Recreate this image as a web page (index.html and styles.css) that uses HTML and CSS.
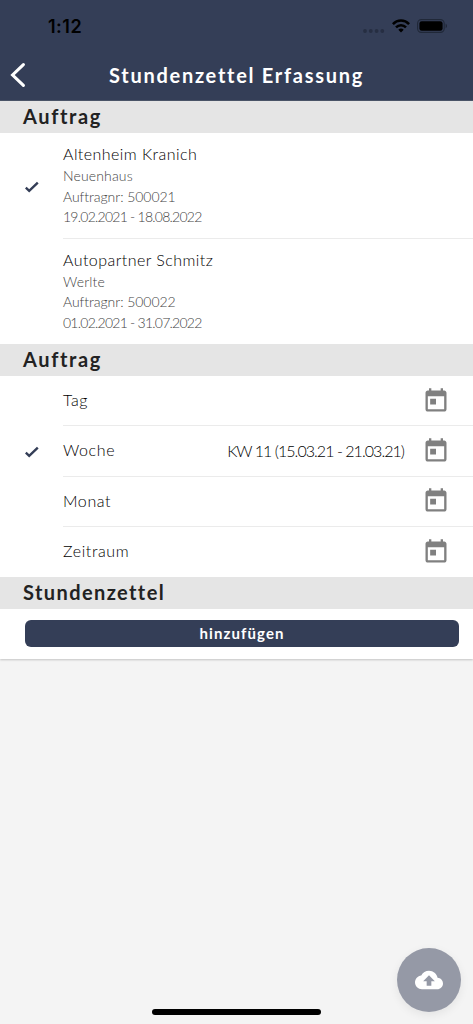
FILE: index.html
```html
<!DOCTYPE html>
<html lang="de">
<head>
    <meta charset="UTF-8">
    <meta name="viewport" content="width=device-width, initial-scale=1.0">
    <title>Stundenzettel Erfassung</title>
    <link rel="stylesheet" href="styles.css">
</head>
<body>
    <svg class="sprite" width="0" height="0">
        <symbol id="calendar" viewBox="0 0 24 24">
            <path d="M19 3h-1V1h-2v2H8V1H6v2H5c-1.11 0-1.99.9-1.99 2L3 19c0 1.1.89 2 2 2h14c1.1 0 2-.9 2-2V5c0-1.1-.9-2-2-2zm0 16H5V8h14v11zM7 10h5v5H7z"/>
        </symbol>
        <symbol id="check" viewBox="0 0 14 12">
            <path d="M.8 6.6L4.2 9.9L12.8 1.7" fill="none" stroke="#343e57" stroke-width="2.4"/>
        </symbol>
    </svg>

    <header>
        <div class="status-bar">
            <span class="time">1:12</span>
            <div class="status-icons">
                <svg width="22" height="4" viewBox="0 0 22 4" fill="#262e42">
                    <circle cx="2" cy="2" r="1.9"/>
                    <circle cx="7.8" cy="2" r="1.9"/>
                    <circle cx="13.6" cy="2" r="1.9"/>
                    <circle cx="19.3" cy="2" r="1.9"/>
                </svg>
                <svg class="wifi" width="18" height="14" viewBox="0 0 18 14" fill="none" stroke="#000" stroke-width="2.5">
                    <path d="M.9 5.1C5.4.4 12.6.4 17.1 5.1"/>
                    <path d="M4 8.3c2.8-2.9 7.2-2.9 10 0"/>
                    <path d="M9 13.4L6.3 10.7c1.5-1.5 3.9-1.5 5.4 0z" fill="#000" stroke="none"/>
                </svg>
                <svg class="battery" width="31" height="14" viewBox="0 0 31 14">
                    <rect x=".6" y=".6" width="26.6" height="12.8" rx="3.8" fill="none" stroke="#202838" stroke-width="1.1"/>
                    <rect x="2.4" y="2.2" width="23.2" height="9.6" rx="2.3"/>
                    <path d="M28.6 4.8c1.9.7 1.9 3.7 0 4.4z" fill="#202838"/>
                </svg>
            </div>
        </div>
        <div class="title-bar">
            <svg class="back" width="16" height="26" viewBox="0 0 16 26">
                <path d="M13.4 2.6L2.6 13l10.8 10.4" fill="none" stroke="#fff" stroke-width="3.1" stroke-linecap="round"/>
            </svg>
            <h1>Stundenzettel Erfassung</h1>
        </div>
    </header>

    <main>
        <h2>Auftrag</h2>
        <ul class="orders">
            <li>
                <div class="mark"><svg width="14" height="12"><use href="#check"/></svg></div>
                <div class="order">
                    <h3>Altenheim Kranich</h3>
                    <p class="place">Neuenhaus</p>
                    <p class="number">Auftragnr: 500021</p>
                    <p class="dates">19.02.2021 - 18.08.2022</p>
                </div>
            </li>
            <li>
                <div class="mark"></div>
                <div class="order">
                    <h3>Autopartner Schmitz</h3>
                    <p class="place">Werlte</p>
                    <p class="number">Auftragnr: 500022</p>
                    <p class="dates">01.02.2021 - 31.07.2022</p>
                </div>
            </li>
        </ul>

        <h2>Auftrag</h2>
        <ul class="periods">
            <li>
                <div class="mark"></div>
                <div class="period">
                    <span class="label">Tag</span>
                    <svg class="calendar"><use href="#calendar"/></svg>
                </div>
            </li>
            <li>
                <div class="mark"><svg width="14" height="12"><use href="#check"/></svg></div>
                <div class="period">
                    <span class="label">Woche</span>
                    <span class="value">KW 11 (15.03.21 - 21.03.21)</span>
                    <svg class="calendar"><use href="#calendar"/></svg>
                </div>
            </li>
            <li>
                <div class="mark"></div>
                <div class="period">
                    <span class="label">Monat</span>
                    <svg class="calendar"><use href="#calendar"/></svg>
                </div>
            </li>
            <li>
                <div class="mark"></div>
                <div class="period">
                    <span class="label">Zeitraum</span>
                    <svg class="calendar"><use href="#calendar"/></svg>
                </div>
            </li>
        </ul>

        <h2 class="sheets">Stundenzettel</h2>
        <div class="add">
            <button type="button">hinzufügen</button>
        </div>
    </main>

    <button type="button" class="upload" aria-label="Hochladen">
        <svg width="28" height="28" viewBox="0 0 24 24" fill="#fff">
            <path d="M19.35 10.04C18.67 6.59 15.64 4 12 4 9.11 4 6.6 5.64 5.35 8.04 2.34 8.36 0 10.91 0 14c0 3.31 2.69 6 6 6h13c2.76 0 5-2.24 5-5 0-2.64-2.05-4.78-4.65-4.96zM14 13v4h-4v-4H7l5-5 5 5h-3z"/>
        </svg>
    </button>
    <div class="home-indicator"></div>
</body>
</html>
```

FILE: styles.css
```css
* {
    box-sizing: border-box;
}
body {
    margin: 0;
    height: 1024px;
    overflow: hidden;
    background-color: #f4f4f4;
    color: #222;
    font-family: Lato, "Liberation Sans", sans-serif;
}
h1, h2, h3, p, ul {
    margin: 0;
    padding: 0;
}
ul {
    list-style-type: none;
}
.sprite {
    position: absolute;
}
header {
    height: 101px;
    background-color: #343e57;
    border-bottom: 1px solid #4b5669;
}
.status-bar {
    display: flex;
    justify-content: space-between;
    height: 51px;
    padding: 16px 25px 0 48px;
}
.time {
    color: #000;
    font-family: Inter, sans-serif;
    font-size: 18px;
    font-weight: 600;
    letter-spacing: 0.5px;
    line-height: 21px;
}
.status-icons {
    display: flex;
    height: 20px;
    align-items: center;
}
.status-icons svg:first-child {
    margin-top: 9px;
}
.wifi {
    margin-left: 7px;
}
.battery {
    margin-left: 7px;
}
.title-bar {
    display: flex;
    align-items: center;
    height: 48px;
    padding-left: 10px;
}
.back {
    margin-right: 83px;
}
h1 {
    color: #fff;
    font-size: 20px;
    font-weight: bold;
    letter-spacing: 1.72px;
    white-space: nowrap;
}
main {
    background-color: #fff;
    box-shadow: 0 1px 2px rgba(0, 0, 0, 0.2);
}
h2 {
    height: 32px;
    padding-left: 23px;
    background-color: #e5e5e5;
    font-size: 20px;
    font-weight: bold;
    letter-spacing: 1.6px;
    line-height: 31px;
}
.sheets {
    letter-spacing: 1.4px;
}
.orders li, .periods li {
    display: flex;
}
.mark {
    display: flex;
    flex: none;
    align-items: center;
    width: 63px;
    padding: 2px 0 0 25px;
}
.order, .period {
    flex: 1;
    border-bottom: 1px solid #ebebeb;
}
li:last-child .order, li:last-child .period {
    border-bottom: none;
}
.order {
    height: 105.5px;
    padding-top: 10px;
    font-weight: 300;
}
h3 {
    margin-bottom: 2px;
    color: #000;
    font-size: 16px;
    font-weight: 300;
    line-height: 21px;
    letter-spacing: 0.45px;
}
.order p {
    color: #444;
    font-size: 14px;
    line-height: 20.6px;
    letter-spacing: 0.15px;
}
.order .number {
    letter-spacing: -0.05px;
}
.order .dates {
    letter-spacing: -0.75px;
}
.period {
    display: flex;
    align-items: center;
    height: 50.25px;
    padding-right: 23px;
    color: #000;
    font-size: 16px;
    font-weight: 300;
}
.label {
    margin-top: -2px;
    letter-spacing: 0.6px;
}
.value {
    margin-top: -1px;
    margin-left: auto;
    margin-right: 18px;
    letter-spacing: -0.95px;
}
.calendar {
    width: 28px;
    height: 28px;
    fill: #808080;
}
.label + .calendar {
    margin-left: auto;
}
.add {
    height: 50px;
    padding: 11px 14px 0 25px;
}
.add button {
    display: block;
    width: 100%;
    height: 27px;
    padding: 0 0 2px;
    border: none;
    border-radius: 6px;
    background-color: #343e57;
    color: #fff;
    font-family: inherit;
    font-size: 15px;
    font-weight: bold;
    letter-spacing: 1.1px;
    cursor: pointer;
}
.upload {
    position: fixed;
    right: 12px;
    bottom: 12px;
    display: flex;
    align-items: center;
    justify-content: center;
    width: 64px;
    height: 64px;
    padding: 0;
    border: none;
    border-radius: 50%;
    background-color: #9599a6;
    box-shadow: 0 3px 10px rgba(0, 0, 0, 0.07);
    cursor: pointer;
}
.home-indicator {
    position: fixed;
    left: 152px;
    bottom: 9px;
    width: 169px;
    height: 6px;
    border-radius: 3px;
    background-color: #000;
}
```
